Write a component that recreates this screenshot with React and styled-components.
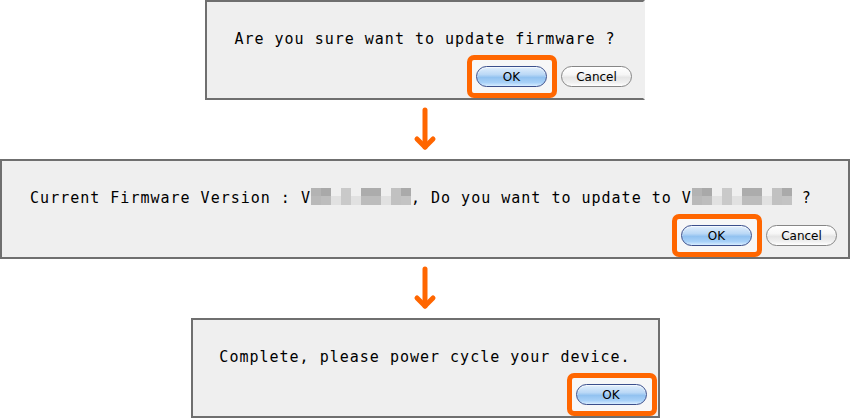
import React from 'react';
import styled, { createGlobalStyle } from 'styled-components';

// three confirmation dialogs stacked, orange arrows between them,
// the OK button of each one circled in orange

const GlobalStyle = createGlobalStyle`
    html, body {
        margin: 0;
        padding: 0;
        background: #ffffff;
    }
`;

const Page = styled.div`
    width: 850px;
    height: 419px;
    display: flex;
    flex-direction: column;
    align-items: center;
    overflow: hidden;
`;

const Dialog = styled.div`
    box-sizing: border-box;
    width: ${(p) => p.$width}px;
    height: 100px;
    flex-shrink: 0;
    display: flex;
    flex-direction: column;
    background: #efefef;
    border: 2px solid #6f6f6f;
    border-right-color: ${(p) => (p.$open ? 'transparent' : '#6f6f6f')};
`;

const Message = styled.div`
    padding-top: 27px;
    padding-right: ${(p) => p.$shift || 0}px;
    text-align: center;
    white-space: nowrap;
    font-family: "DejaVu Sans Mono", "Liberation Mono", monospace;
    font-size: 15px;
    line-height: 20px;
    letter-spacing: 1px;
    color: #000;
`;

const Blur = styled.span`
    display: inline-flex;
    height: 17px;
    vertical-align: -2px;
`;

const Cell = styled.span`
    width: 10px;
    height: 17px;
    background: linear-gradient(to bottom, ${(p) => p.$top} 0 50%, ${(p) => p.$bottom} 50% 100%);
`;

const ButtonRow = styled.div`
    margin-top: auto;
    padding: 0 11px 11px 0;
    display: flex;
    justify-content: flex-end;
    gap: 14px;
`;

const Button = styled.button`
    position: relative;
    z-index: 1;
    box-sizing: border-box;
    width: 71px;
    height: 21px;
    padding: 0;
    border-radius: 11px;
    font-family: "DejaVu Sans", "Liberation Sans", sans-serif;
    font-size: 12px;
    color: #000;
    border: 1px solid ${(p) => (p.$primary ? '#3b4f8c' : '#868686')};
    background: ${(p) =>
        p.$primary
            ? 'linear-gradient(to bottom, #e2effc 0%, #bad8f6 40%, #92c2f0 55%, #a8d1f8 82%, #d8edff 100%)'
            : 'linear-gradient(to bottom, #ffffff 0%, #f6f6f6 40%, #e5e5e5 55%, #f0f0f0 82%, #ffffff 100%)'};
    box-shadow: inset 0 1px 1px rgba(255, 255, 255, 0.7);
`;

const Highlight = styled.span`
    position: relative;
    display: inline-flex;

    &::before {
        content: '';
        position: absolute;
        inset: -11px -10px -11px -9px;
        border: 5px solid #ff6600;
        border-radius: 7px;
        background: #f7f7f7;
    }
`;

const ArrowGap = styled.div`
    height: 59px;
    flex-shrink: 0;
    display: flex;
    justify-content: center;
    padding-top: 6px;
    box-sizing: border-box;
`;

const BG = '#efefef';
const blurCells = [
    ['#b3b3b3', '#b9b9b9'],
    ['#a9a9a9', '#bdbdbd'],
    [BG, '#e1e1e1'],
    ['#c9c9c9', '#c9c9c9'],
    [BG, '#e1e1e1'],
    ['#acacac', '#bcbcbc'],
    ['#acacac', '#bcbcbc'],
    [BG, '#e1e1e1'],
    ['#c1c1c1', '#c1c1c1'],
    ['#aaaaaa', '#c3c3c3'],
];

const Blurred = () => (
    <Blur>
        {blurCells.map(([top, bottom], i) => (
            <Cell key={i} $top={top} $bottom={bottom} />
        ))}
    </Blur>
);

const Arrow = () => (
    <ArrowGap>
        <svg width="24" height="46" viewBox="0 0 24 46">
            <g fill="none" stroke="#ff6600" strokeWidth="5" strokeLinecap="round" strokeLinejoin="round">
                <line x1="12" y1="4" x2="12" y2="41" />
                <polyline points="4,33 12,41 20,33" />
            </g>
        </svg>
    </ArrowGap>
);

const Buttons = ({ cancel }) => (
    <ButtonRow>
        <Highlight>
            <Button $primary>OK</Button>
        </Highlight>
        {cancel && <Button>Cancel</Button>}
    </ButtonRow>
);

const App = () => {
    return (
        <Page>
            <GlobalStyle />
            <Dialog $width={440} $open>
                <Message>Are you sure want to update firmware ?</Message>
                <Buttons cancel />
            </Dialog>
            <Arrow />
            <Dialog $width={850}>
                <Message $shift={8}>
                    Current Firmware Version : V<Blurred />, Do you want to update to V<Blurred /> ?
                </Message>
                <Buttons cancel />
            </Dialog>
            <Arrow />
            <Dialog $width={469}>
                <Message>Complete, please power cycle your device.</Message>
                <Buttons />
            </Dialog>
        </Page>
    );
};

export default App;
